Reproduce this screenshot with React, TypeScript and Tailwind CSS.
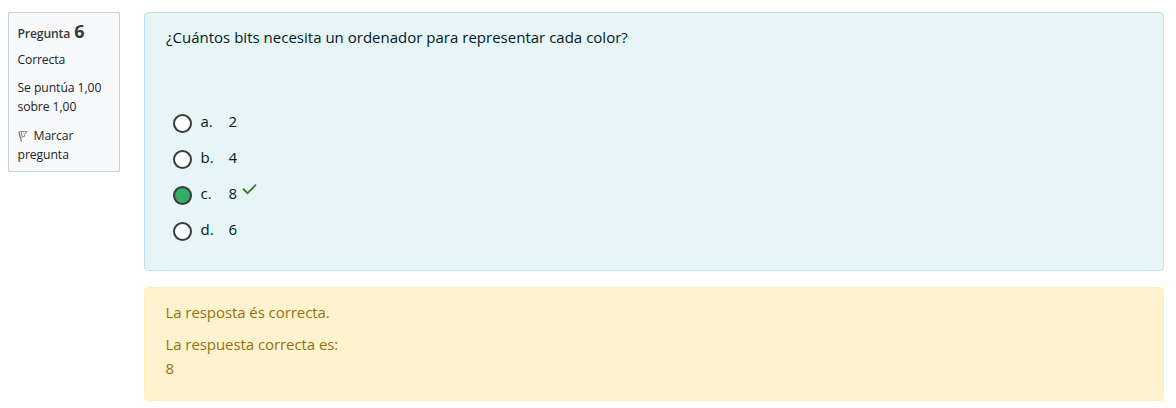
const options = [
  { letter: 'a.', value: '2', checked: false },
  { letter: 'b.', value: '4', checked: false },
  { letter: 'c.', value: '8', checked: true },
  { letter: 'd.', value: '6', checked: false },
];

function FlagIcon() {
  return (
    <svg className="mr-[6px] inline-block h-3 w-[10px] align-[-2px]" viewBox="0 0 10 12" fill="none" stroke="#858585" strokeWidth="1">
      <path d="M.9 1.6L3.4 11.5" strokeWidth="1.3" />
      <path d="M1 1.8C3.5.6 5.5 2.2 9.2 1.5L6.4 4.4 6.6 6.3 3 7.2M3 2L4 6" />
    </svg>
  );
}

function InfoPanel() {
  return (
    <aside className="h-40 w-28 shrink-0 rounded-[2px] border border-[#cad0d7] bg-[#f8f9fa] pl-[8.5px] text-[12.2px] leading-[19px] text-[#212529]">
      <h3 className="mt-[6px] flex h-6 items-baseline whitespace-nowrap font-semibold leading-6 text-[#373a3c]">
        <span className="tracking-[-0.15px]">Pregunta</span>
        <span className="ml-1 text-[18px] font-bold">6</span>
      </h3>
      <div className="mt-[7px] tracking-[-0.15px]">Correcta</div>
      <div className="mt-[9px] whitespace-nowrap tracking-[-0.08px]">Se puntúa 1,00<br />sobre 1,00</div>
      <div className="mt-[10px] whitespace-nowrap tracking-[-0.08px]"><FlagIcon />Marcar<br />pregunta</div>
    </aside>
  );
}

export default function App() {
  return (
    <main className="flex h-[408px] w-[1176px] gap-6 overflow-hidden bg-white pl-2 pt-3 font-['Open_Sans','Noto_Sans',sans-serif] text-[15px] leading-6">
      <InfoPanel />
      <div className="w-[1020px]">
        <section className="h-[259px] rounded-[4px] border border-[#b8e2ea] bg-[#e7f5f6] pl-[21px] pt-3 text-[#001a1e]">
          <p className="whitespace-nowrap tracking-[0.01px]">¿Cuántos bits necesita un ordenador para representar cada color?</p>
          <div className="mt-[60px] pl-[7px]">
            {options.map((o) => (
              <div key={o.letter} className="flex h-9">
                <span className={`mt-[5px] size-[19px] rounded-full border-2 border-[#343a40] ${o.checked ? 'bg-[#35ac66]' : 'bg-white'}`} />
                <span className="ml-[8.5px] w-7">{o.letter}</span>
                <span>{o.value}</span>
                {o.checked && (
                  <svg className="ml-[5px] mt-[2px] h-3 w-[15px]" viewBox="0 0 15 12" fill="none" stroke="#397e35" strokeWidth="1.9">
                    <path d="M1 5.8L5.5 10.2 14 1.7" />
                  </svg>
                )}
              </div>
            ))}
          </div>
        </section>
        <section className="mt-4 h-[114px] rounded-[4px] border border-[#ffeeba] bg-[#fff2ce] pl-[20.5px] pt-3 tracking-[-0.07px] text-[#957110]">
          <p>La resposta és correcta.</p>
          <p className="mt-2">La respuesta correcta es:<br />8</p>
        </section>
      </div>
    </main>
  );
}
